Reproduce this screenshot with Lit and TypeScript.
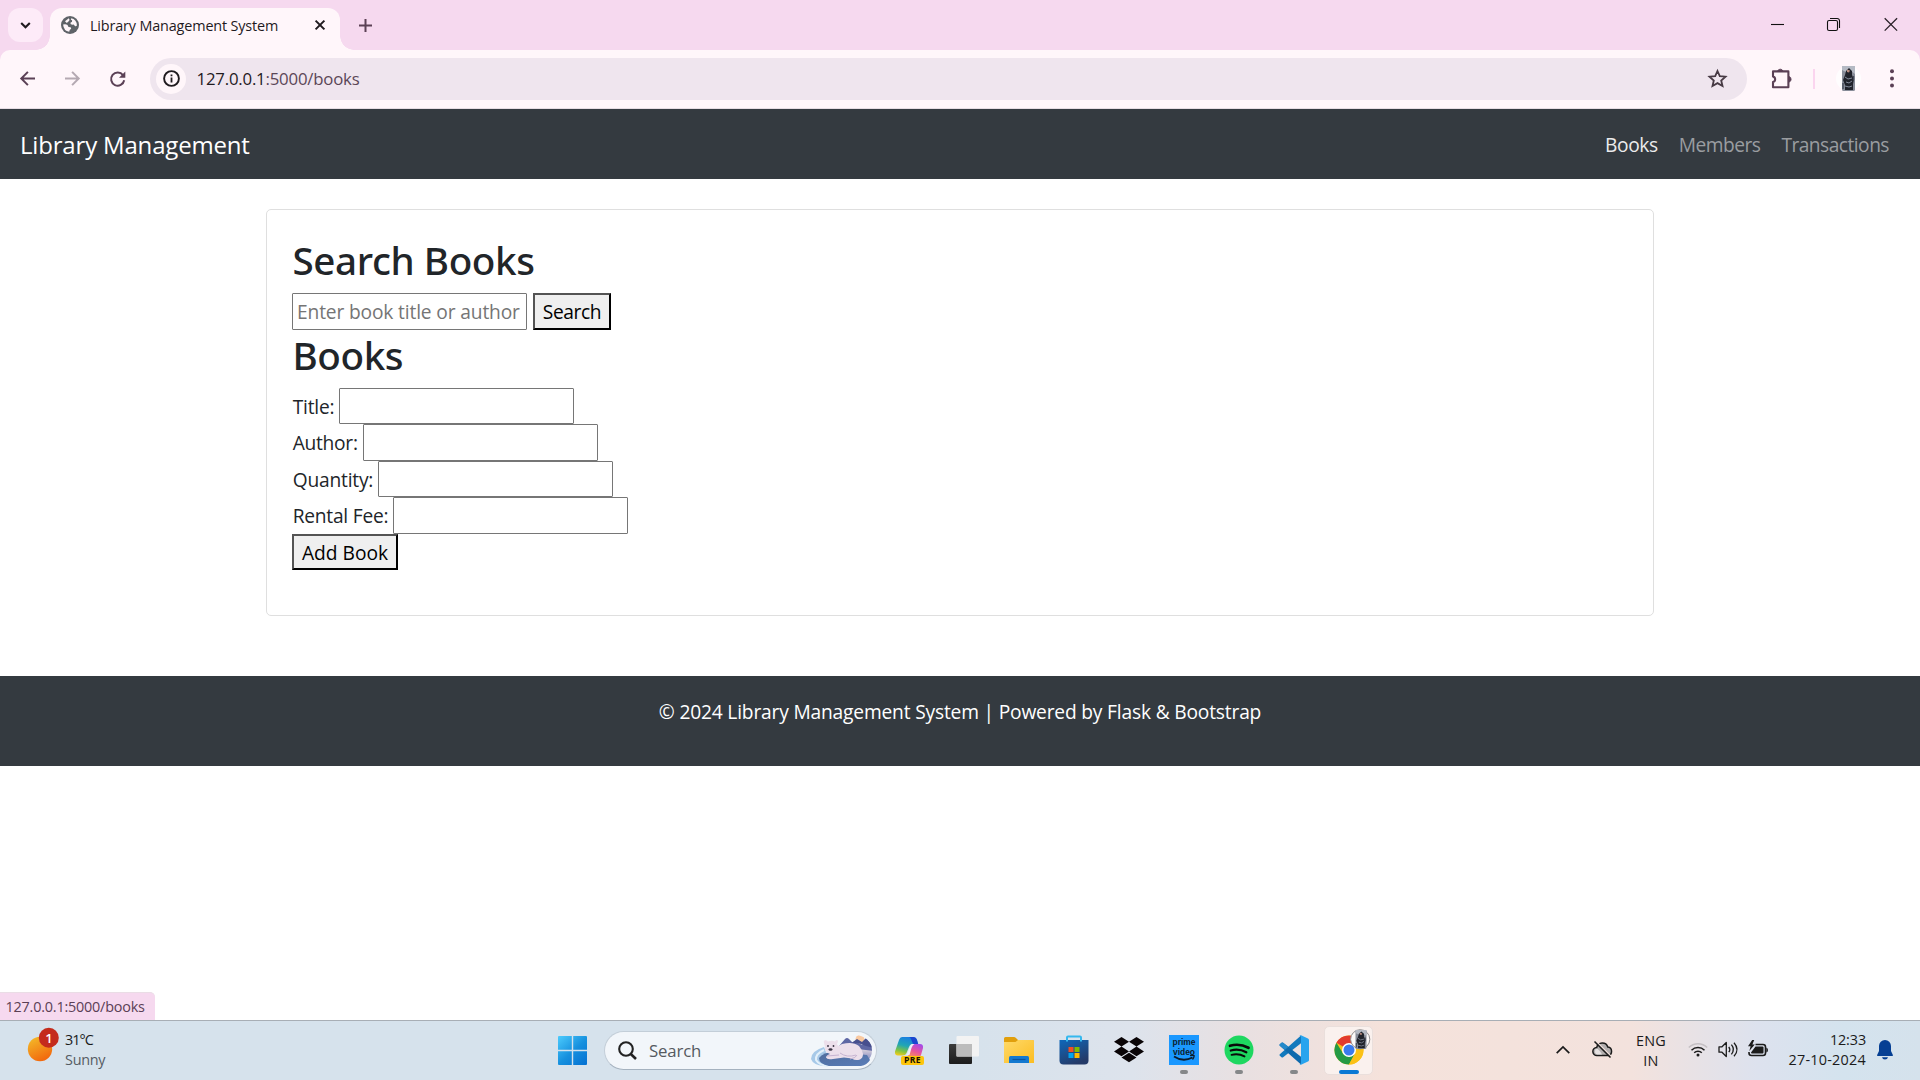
import { LitElement, html, css, svg } from "lit";
import { customElement } from "lit/decorators.js";

const shared = css`
  *, *::before, *::after { box-sizing: border-box; }
  svg { display: block; flex: none; overflow: visible; }
  .t { white-space: nowrap; }
`;

/* small photo of a dark figure on a pale background */
const photo = svg`
  <rect x="0" y="0" width="13" height="25" rx="1.5" fill="#878c98"/>
  <path d="M0 0h13v8l-4-3-3 2-6-3z" fill="#b4b9c3"/>
  <path d="M4 5l3-3 3 3 0 4 2 4-1 5 0 6H3l0-5-2-5 2-5z" fill="#20232b"/>
  <path d="M5 3.500l3 1-1 2-2-.6z" fill="#b98d80"/>
  <path d="M3 11l3 2 4-1M4 16l3 1 3-2M3 20l4 1 3-1" fill="none" stroke="#838a99" stroke-width="1"/>
  <path d="M1 17v6M11.500 10v4" stroke="#454b59" stroke-width="1.400"/>`;

@customElement("browser-chrome")
export class BrowserChrome extends LitElement {
  static styles = [shared, css`
    :host { display: block; background: #f6d9ef; color: #1f1a1e; }
    .strip { display: flex; height: 50px; }
    .menu { width: 35px; height: 34px; margin: 8px 0 0 8px; border-radius: 12px; background: #fdebf8; display: flex; align-items: center; justify-content: center; }
    .tab { position: relative; width: 290px; height: 42px; margin: 8px 0 0 7px; border-radius: 12px 12px 0 0; background: #fff6fa; display: flex; align-items: flex-start; padding: 8px 15px 0 11px; }
    .tab::before, .tab::after { content: ""; position: absolute; bottom: 0; width: 14px; height: 14px; }
    .tab::before { left: -14px; background: radial-gradient(circle at 0 0, transparent 13.5px, #fff6fa 14px); }
    .tab::after { right: -14px; background: radial-gradient(circle at 100% 0, transparent 13.5px, #fff6fa 14px); }
    .tab .t { font-size: 14.4px; line-height: 20px; letter-spacing: -0.15px; margin-left: 11px; flex: 1; }
    .x { margin: 4px 0 0; }
    .plus { margin: 19px 0 0 19px; }
    .win { margin-left: auto; display: flex; align-items: flex-start; gap: 43px; padding: 17px 22px 0 0; }
    .win .close { margin-left: 1px; }
    .bar { height: 59px; background: #fff6fa; border-bottom: 1px solid #e6dce3; border-radius: 10px 10px 0 0; display: flex; align-items: center; padding: 0 26px 1px 20px; }
    .nav { display: flex; gap: 30px; width: 130px; }
    .omni { width: 1597px; height: 42px; border-radius: 21px; background: #efe5ee; display: flex; align-items: center; padding: 0 20px 0 6px; }
    .info { width: 30px; height: 30px; border-radius: 50%; background: #fff6fa; display: flex; align-items: center; justify-content: center; }
    .omni .t { margin-left: 10.5px; font-size: 16.8px; letter-spacing: -0.2px; flex: 1; color: #5b4757; }
    .omni b { font-weight: 400; color: #1f1a1e; }
    .ext { margin-left: 24px; }
    .sep { width: 2px; height: 20px; margin: 0 21px 0 21px; background: #fbd5ef; }
    .ava { width: 25px; height: 25px; border-radius: 50%; background: #fffdfe; display: flex; justify-content: center; }
    .dots { margin-left: auto; }
  `];
  render() {
    return html`
      <div class="strip">
        <div class="menu"><svg width="11" height="7" viewBox="0 0 11 7"><path d="M1.2 1l4.3 4.3L9.8 1" fill="none" stroke="#1f1a1e" stroke-width="2.1"/></svg></div>
        <div class="tab">
          <svg width="18" height="18" viewBox="0 0 18 18"><circle cx="9" cy="9" r="9" fill="#5f6368"/>
            <path d="M10.200 2.200A7 7 0 0 1 15.900 9.400q-.8 1.200-2 .6l-1.200-1.400q-1.800.3-2.900-.4-.9-1.300.2-2l1-.3.1-1.600-1.200-.5z" fill="#fff6fa"/>
            <path d="M2.100 8.600q2.800-.7 4.400.5l1 1.800 2.200.4.500 1.500-1.500 1.100-.5 1.900Q2.600 15 2.100 8.600z" fill="#fff6fa"/>
            <path d="M4 5.200L7.800 2.300 8.600 4 7.400 5.600 5.800 6.900z" fill="#fff6fa"/></svg>
          <span class="t">Library Management System</span>
          <svg class="x" width="10" height="10" viewBox="0 0 10 10"><path d="M.6.6l8.800 8.800M9.400.6L.6 9.400" stroke="#1f1a1e" stroke-width="2"/></svg>
        </div>
        <svg class="plus" width="13" height="13" viewBox="0 0 13 13"><path d="M6.5 0v13M0 6.5h13" stroke="#5b4055" stroke-width="2"/></svg>
        <div class="win">
          <svg width="13" height="14" viewBox="0 0 13 14"><path d="M0 7.5h13" stroke="#111" stroke-width="1.1"/></svg>
          <svg width="13" height="14" viewBox="0 0 13 14" fill="none" stroke="#111" stroke-width="1.1"><rect x=".5" y="3.500" width="10" height="10" rx="1.6"/><path d="M3 1.500h7.200a2.300 2.300 0 0 1 2.300 2.300v7.200"/></svg>
          <svg class="close" width="14" height="14" viewBox="0 0 14 14"><path d="M.7 1.2l12.4 12.4M13.1 1.2L.7 13.6" stroke="#2a2028" stroke-width="1.3"/></svg>
        </div>
      </div>
      <div class="bar">
        <div class="nav">
          <svg width="15" height="15" viewBox="0 0 15 15" fill="none" stroke="#5b4055" stroke-width="2"><path d="M15 7.5H1.6M7.900.9L1.300 7.500l6.600 6.600"/></svg>
          <svg width="15" height="15" viewBox="0 0 15 15" fill="none" stroke="#b5a9b2" stroke-width="2"><path d="M0 7.500h13.400M7.100.9l6.600 6.600-6.600 6.600"/></svg>
          <svg width="16" height="16" viewBox="0 0 16 16"><path d="M14.200 9.300a6.600 6.600 0 1 1-1.200-5.200" fill="none" stroke="#5b4055" stroke-width="2"/><path d="M15.300.4v6.400H9z" fill="#5b4055"/></svg>
        </div>
        <div class="omni">
          <div class="info"><svg width="17" height="17" viewBox="0 0 17 17"><circle cx="8.500" cy="8.500" r="7.400" fill="none" stroke="#1f1a1e" stroke-width="1.900"/><path d="M8.500 7.500v5M8.500 4.400v1.900" stroke="#1f1a1e" stroke-width="1.800"/></svg></div>
          <span class="t"><b>127.0.0.1</b>:5000/books</span>
          <svg width="20" height="19" viewBox="0 0 20 19"><path d="M10.500 2l2.300 5.200 5.700.5-4.300 3.800 1.300 5.500-5-2.900-5 2.900 1.300-5.500-4.300-3.800 5.700-.5z" fill="none" stroke="#473a44" stroke-width="1.800"/></svg>
        </div>
        <svg class="ext" width="21" height="22" viewBox="0 0 21 22"><path d="M2 3.400h15.400v15.800H2v-5.100a2.900 2.900 0 0 0 0-5.600z" fill="none" stroke="#5b4055" stroke-width="2.100" stroke-linejoin="round"/><path d="M6.600 3a2.900 2.900 0 0 1 5.400 0z M18 8.500a2.900 2.900 0 0 1 0 5.600z" fill="#5b4055" stroke="#5b4055" stroke-width=".8"/></svg>
        <div class="sep"></div>
        <div class="ava"><svg width="13" height="25" viewBox="0 0 13 25">${photo}</svg></div>
        <svg class="dots" width="4" height="19" viewBox="0 0 4 19" fill="#5b4055"><circle cx="2" cy="2.200" r="2"/><circle cx="2" cy="9.400" r="2"/><circle cx="2" cy="16.600" r="2"/></svg>
      </div>`;
  }
}

const fields = [
  { label: "Title:", width: 47, spacing: -0.22 },
  { label: "Author:", width: 71, spacing: -0.28 },
  { label: "Quantity:", width: 86, spacing: -0.2 },
  { label: "Rental Fee:", width: 101, spacing: -0.24 },
];

@customElement("library-page")
export class LibraryPage extends LitElement {
  static styles = [shared, css`
    :host { display: block; flex: 1; background: #fff; color: #212529; font-size: 19.2px; line-height: 30px; }
    .navbar { height: 70px; background: #343a40; display: flex; align-items: center; justify-content: space-between; padding: 2px 31px 0 20px; color: #fff; }
    .brand { font-size: 24px; letter-spacing: -0.18px; }
    .links { display: flex; gap: 21px; color: #9a9da0; letter-spacing: -0.53px; }
    .links .on { color: #ebebec; letter-spacing: -0.4px; }
    .card { width: 1388px; height: 407px; margin: 30px auto 0; border: 1px solid #dfdfdf; border-radius: 5px; padding: 25px; }
    h2 { margin: 0 0 10px; font: 500 38.6px/48px "Noto Sans", sans-serif; letter-spacing: -0.4px; padding: 1px 0 0 .5px; height: 48px; }
    .row { display: flex; height: 36.5px; align-items: flex-start; }
    .row label { line-height: 38px; white-space: nowrap; padding-left: .7px; }
    input { width: 235px; height: 36.5px; border: 1px solid #767676; border-radius: 1px; padding: 0 4px; margin: 0; font: inherit; background: #fff; outline: 0; letter-spacing: -0.15px; }
    input::placeholder { color: #757575; }
    button { height: 36.5px; border: 2px outset #000; border-radius: 0; background: #efefef; color: #000; font: inherit; padding: 1px 0 0; margin: 0; white-space: nowrap; }
    .go { width: 78px; margin-left: 6px; letter-spacing: -0.4px; }
    .add { width: 106px; padding-top: 2px; }
    .foot { height: 90px; margin-top: 60px; background: #343a40; color: #fff; text-align: center; padding-top: 21px; letter-spacing: -0.18px; }
  `];
  render() {
    return html`
      <div class="navbar">
        <span class="t brand">Library Management</span>
        <div class="links"><span class="t on">Books</span><span class="t">Members</span><span class="t">Transactions</span></div>
      </div>
      <div class="card">
        <h2>Search Books</h2>
        <div class="row"><input placeholder="Enter book title or author"><button class="go">Search</button></div>
        <h2>Books</h2>
        ${fields.map((f) => html`<div class="row"><label style="width:${f.width}px;letter-spacing:${f.spacing}px">${f.label}</label><input></div>`)}
        <div class="row"><button class="add">Add Book</button></div>
      </div>
      <div class="foot">© 2024 Library Management System | Powered by Flask &amp; Bootstrap</div>`;
  }
}

const bear = svg`
  <defs>
    <linearGradient id="lake" x1="0" y1="0" x2="0" y2="1"><stop offset="0" stop-color="#f5e9e4"/><stop offset=".45" stop-color="#a9a9cc"/><stop offset="1" stop-color="#6f86b8"/></linearGradient>
    <linearGradient id="rock" x1="0" y1="0" x2="1" y2="1"><stop offset="0" stop-color="#4f6c9c"/><stop offset="1" stop-color="#5a7db8"/></linearGradient>
    <clipPath id="cap"><path d="M24 0h21a17 15.500 0 0 1 0 31H12z"/></clipPath>
  </defs>
  <path d="M14 12Q1 16 1 24q2 6 13 7h8z" fill="#a7c9e8"/><path d="M14 15Q5 19 6 25q3 5 12 6" fill="none" stroke="#e3f0fa" stroke-width="2"/>
  <g clip-path="url(#cap)"><rect x="28" y="11" width="36" height="20" fill="url(#lake)"/><circle cx="50" cy="4.500" r="4.500" fill="#f9c9a0"/>
    <path d="M29 11l6-7q2-2 4 0l4 4 4-1 5 3 5-5 7 6v5q-18-3-35-2z" fill="#5e67a4"/><path d="M40 9l8-1 8 3 8 2v-5l-7-6-5 5-5-3z" fill="#474f8e"/></g>
  <path d="M9 23q5-7 18-6l30 3 3 5q-3 5-9 6H19Q9 29 9 23z" fill="url(#rock)"/>
  <path d="M14 8q-1-2 1-3 2 0 3 1.500 4-1.500 7 0Q27 4 28 6q0 2-1.200 3l1.500 2Q32 8.500 36 8.200 44 7 49 11q3.500 4 4 8 0 4-3 5.500-5 1.500-8-1l-8-1-11 1.500q-6 1-7-1.500 0-2 4-3.500-6-2-5-7z" fill="#ecdfeb"/>
  <path d="M30 18q7 5 16 2M17 21l12-1M40 24q6-1 7-4" fill="none" stroke="#c6b3d1" stroke-width="1"/>
  <circle cx="18" cy="11" r=".9" fill="#3b3444"/><circle cx="23.500" cy="11" r=".9" fill="#3b3444"/><ellipse cx="20.500" cy="14.500" rx="2" ry="1.300" fill="#3b3444"/>`;

@customElement("task-bar")
export class TaskBar extends LitElement {
  static styles = [shared, css`
    :host { display: flex; height: 60px; border-top: 1px solid #a8aeb5; color: #1b1b1b; font-size: 14.4px; line-height: 20px;
      background: linear-gradient(90deg, #d6e2ec 0, #d6e2ec 50%, #dde3ec 59%, #e9e0e1 65%, #f5e2db 72%, #f3e2dd 85%, #dde2ee 91.5%, #d4e3ee 96%, #d5e2ec 100%); }
    .weather { width: 545px; padding: 8px 0 0 28px; display: flex; }
    .weather svg { margin-top: -1px; }
    .weather .txt { margin-left: 6px; padding-top: 1px; display: flex; flex-direction: column; }
    .deg { letter-spacing: -0.95px; }
    .sunny { letter-spacing: -0.25px; color: #555c63; }
    .start { width: 59px; padding: 15px 0 0 13px; }
    .search { width: 273px; height: 39px; margin-top: 10px; border-radius: 20px; background: #f2f6fa; border: 1px solid #c3ced8; border-bottom-color: #a5b2bf; display: flex; align-items: center; padding: 0 2px 0 13px; }
    .search .t { margin-left: 12px; font-size: 16.8px; letter-spacing: -0.17px; color: #555a60; flex: 1; padding-top: 1px; }
    .apps { display: flex; margin-left: 4px; }
    .app { width: 55px; height: 59px; display: flex; flex-direction: column; align-items: center; justify-content: flex-start; }
    .app > svg { margin-top: 14px; }
    .app i { width: 8px; height: 4px; border-radius: 2px; background: #858789; margin-top: 5px; }
    .app.on { width: 49px; height: 49px; margin: 5px 0 0 3px; border-radius: 5px; background: #faf1ee; border: 1px solid #eadfdc; }
    .app.on > svg { margin-top: 8px; }
    .app.on i { width: 20px; background: #0a78d4; }
    .tray { flex: 1; display: flex; align-items: center; padding: 0 27px 2px 183px; }
    .tray .cloud { margin-left: 22px; }
    .lang { width: 32px; margin: 2px 0 0 22px; text-align: center; letter-spacing: .3px; }
    .wifi { margin-left: 21px; }
    .vol { margin-left: 10px; }
    .bat { margin-left: 10px; }
    .clock { margin: 1px 11px 0 auto; text-align: right; display: flex; flex-direction: column; }
    .date { letter-spacing: .24px; } .time { letter-spacing: -0.12px; }
  `];
  render() {
    return html`
      <div class="weather">
        <svg width="31" height="33" viewBox="0 0 31 33"><defs><linearGradient id="sun" x1=".2" y1="0" x2=".7" y2="1"><stop offset="0" stop-color="#f3b928"/><stop offset="1" stop-color="#f2640c"/></linearGradient></defs>
          <circle cx="12" cy="21" r="12.200" fill="url(#sun)"/><circle cx="20.800" cy="9.800" r="10" fill="#c42b1c"/>
          <text x="21" y="14.600" font-size="13" font-weight="600" fill="#fff" text-anchor="middle">1</text></svg>
        <div class="txt"><span class="t deg">31°C</span><span class="t sunny">Sunny</span></div>
      </div>
      <div class="start"><svg width="29" height="29" viewBox="0 0 29 29"><defs><linearGradient id="w" gradientUnits="userSpaceOnUse" x1="0" y1="0" x2="26" y2="29"><stop offset="0" stop-color="#4ccbfd"/><stop offset=".55" stop-color="#1690de"/><stop offset="1" stop-color="#0673d3"/></linearGradient></defs>
        <path d="M1 0h12.800v13.800H0V1a1 1 0 0 1 1-1zM15.200 0H28a1 1 0 0 1 1 1v12.800H15.200zM0 15.200h13.800V29H1a1 1 0 0 1-1-1zM15.200 15.200H29V28a1 1 0 0 1-1 1H15.200z" fill="url(#w)"/></svg></div>
      <div class="search">
        <svg width="19" height="19" viewBox="0 0 19 19" fill="none" stroke="#222" stroke-width="2.100"><circle cx="8" cy="8" r="6.800"/><path d="M12.800 13l5.200 5" stroke-width="2.600"/></svg>
        <span class="t">Search</span>
        <svg width="64" height="31" viewBox="0 0 64 31">${bear}</svg>
      </div>
      <div class="apps">
        <div class="app"><svg width="30" height="30" viewBox="0 0 30 30"><defs>
            <linearGradient id="ca" x1=".5" y1="0" x2=".2" y2="1"><stop offset="0" stop-color="#1a7fe0"/><stop offset=".45" stop-color="#21a6b4"/><stop offset=".75" stop-color="#7fc343"/><stop offset="1" stop-color="#f2cc1c"/></linearGradient>
            <linearGradient id="cb" x1=".8" y1="0" x2=".3" y2="1"><stop offset="0" stop-color="#a34bea"/><stop offset=".5" stop-color="#e8549d"/><stop offset="1" stop-color="#fb9a4c"/></linearGradient></defs>
          <path d="M8 2h11q3 0 4 3l1 4h-5q-3 0-4 3l-2.500 6q-1 2.500-4 2.500H4q-3.500 0-3-4L5 5q1-3 3-3z" fill="url(#ca)"/>
          <path d="M15 2h4q3 0 4 3l1.200 4H19l-2-5q-.6-2-2-2z" fill="#1b46cf"/>
          <path d="M20 9h6q3.500 0 3 4l-2 7q-1 3-4 3H10.500q3 0 4-3l2.500-8q1-3 3-3z" fill="url(#cb)"/>
          <path d="M18 9h2.500q-2 1-3 4l-2 7H12q1 0 2-3l2-5q.8-3 2-3z" fill="#eef0f8"/>
          <rect x="7" y="21" width="23" height="9" rx="2" fill="#fdc50c"/><text x="18.500" y="28.400" font-size="8.600" font-weight="700" letter-spacing=".4" text-anchor="middle" fill="#1a1400">PRE</text></svg></div>
        <div class="app"><svg width="30" height="30" viewBox="0 0 30 30"><defs><linearGradient id="tv" x1="0" y1="0" x2="0" y2="1"><stop offset="0" stop-color="#3c3c3c"/><stop offset="1" stop-color="#1c1c1c"/></linearGradient></defs>
          <rect x="0" y="9" width="23" height="20" rx="1" fill="url(#tv)"/><rect x="7.500" y="1" width="22.500" height="20.500" rx="1" fill="#f3f3f3"/><path d="M7.500 9H23v12.500H7.500z" fill="#bcbcbc"/></svg></div>
        <div class="app"><svg width="30" height="30" viewBox="0 0 30 30"><defs><linearGradient id="fo" x1="0" y1="0" x2="1" y2="1"><stop offset="0" stop-color="#ffd969"/><stop offset="1" stop-color="#fbbd22"/></linearGradient></defs>
          <path d="M0 3.500Q0 2 1.500 2H10q1 0 1.700.7L14 5h14.500Q30 5 30 6.500V12H0z" fill="#e19f0c"/><path d="M0 7h10.500q1 0 1.700-.6L14 5h14.700Q30 5 30 6.500V28H0z" fill="url(#fo)"/>
          <path d="M5 28v-5.500Q5 21 6.500 21h17Q25 21 25 22.500V28z" fill="#1379d0"/><path d="M8.500 24.500h13" stroke="#0a549f" stroke-width="1.200"/></svg></div>
        <div class="app"><svg width="30" height="30" viewBox="0 0 30 30"><defs><linearGradient id="st" x1="0" y1="0" x2=".5" y2="1"><stop offset="0" stop-color="#0f68bb"/><stop offset="1" stop-color="#243a68"/></linearGradient></defs>
          <path d="M.5 5h29v20.500q0 4-4 4h-21q-4 0-4-4z" fill="url(#st)"/><path d="M8 6.500V2.500Q8 1.500 9 1.500h12q1 0 1 1V6.500" fill="none" stroke="#35b8ee" stroke-width="2"/>
          <path d="M9.500 12h5v5h-5z" fill="#f25022"/><path d="M15.500 12h5v5h-5z" fill="#7fba00"/><path d="M9.500 18h5v5h-5z" fill="#00a4ef"/><path d="M15.500 18h5v5h-5z" fill="#ffb900"/></svg></div>
        <div class="app"><svg width="30" height="30" viewBox="0 0 30 30"><path d="M7.500 2l7.500 4.800-7.500 4.800L0 6.800zM22.500 2L30 6.800l-7.500 4.800L15 6.800zM7.500 11.600l7.500 4.800-7.500 4.800L0 16.400zM22.500 11.600l7.500 4.800-7.500 4.800L15 16.400zM15 17.800l7.500 4.700L15 27.300l-7.500-4.800z" fill="#0a0507"/></svg></div>
        <div class="app"><svg width="30" height="30" viewBox="0 0 30 30"><rect width="30" height="30" fill="#1a98ff"/>
          <g font-family="Liberation Sans" font-size="8.200" font-weight="700" text-anchor="middle" fill="#0b1b2b"><text x="15" y="9.600" textLength="23" lengthAdjust="spacingAndGlyphs">prime</text><text x="15" y="19.700" textLength="22" lengthAdjust="spacingAndGlyphs">video</text></g>
          <path d="M5 21.500q9 6 18.500 1" fill="none" stroke="#0b1b2b" stroke-width="1.800"/><path d="M21 20.600q3-.8 4.200.2-.2 2-1.700 3.700" fill="none" stroke="#0b1b2b" stroke-width="1.300"/></svg><i></i></div>
        <div class="app"><svg width="30" height="30" viewBox="0 0 30 30"><circle cx="15" cy="15" r="14.500" fill="#1ed760"/><g fill="none" stroke="#0a0a0a" stroke-linecap="round"><path d="M6 10.800q9.500-2.800 18.500 2" stroke-width="2.700"/><path d="M6.800 15.500q8-2.300 15.500 1.700" stroke-width="2.300"/><path d="M7.500 19.900q7-1.700 13 1.500" stroke-width="1.900"/></g></svg><i></i></div>
        <div class="app"><svg width="30" height="30" viewBox="0 0 30 30"><path d="M22 .4L.8 19.300q-.8.800 0 1.500l1.700 1.500q.8.600 1.600 0L22 8.300z" fill="#1279bd"/><path d="M22 29.600L.8 10.700q-.8-.8 0-1.500l1.700-1.500q.8-.6 1.600 0L22 21.700z" fill="#0e6aad"/><path d="M9.500 11.800L4.100 7.700q-.8-.6-1.600 0L.8 9.200q-.8.700 0 1.500l5 4.400z" fill="#2489ca"/><path d="M22 .2l7 3.200q1 .5 1 1.600v20q0 1.100-1 1.600l-7 3.200q-1 .2-2-.8 1.500.8 2-1V2q-.5-1.800-2-1 1-1 2-.8z" fill="#28a4ee"/></svg><i></i></div>
        <div class="app on"><svg width="30" height="30" viewBox="0 0 30 30">
          <circle cx="15" cy="15" r="14.500" fill="#fbc116"/>
          <path d="M15 15L2.400 7.800A14.500 14.500 0 0 1 27.600 7.800z" fill="#e33b2e"/>
          <path d="M2.440 7.750L9.100 18.500 15 21.800 20.900 18.400 15 29.500A14.500 14.500 0 0 1 2.440 7.750z" fill="#249a45"/><path d="M20.800 8.300h7.100A14.500 14.500 0 0 1 15 29.500l6-11z" fill="#fbc116"/>
          <circle cx="15" cy="15" r="7" fill="#fff"/><circle cx="15" cy="15" r="5.500" fill="#3a7bee"/>
          <circle cx="26.200" cy="4.300" r="9.600" fill="#fcfafa" stroke="#8f8d8e" stroke-width="1"/><svg x="21.500" y="-5" width="11" height="19" viewBox="0 0 13 25" preserveAspectRatio="none">${photo}</svg></svg><i></i></div>
      </div>
      <div class="tray">
        <svg width="14" height="8" viewBox="0 0 14 8"><path d="M.7 7.200L7 1l6.300 6.200" fill="none" stroke="#1b1b1b" stroke-width="1.700"/></svg>
        <svg class="cloud" width="21" height="17" viewBox="0 0 21 17"><path d="M5 14.500a4 4 0 0 1-.3-8A5.800 5.800 0 0 1 15.800 6a4.300 4.300 0 0 1 .2 8.500z" fill="#b4b0b0" stroke="#1b1b1b" stroke-width="1.500"/><path d="M3.500 8q3-1 6.500 5.500H5q-3-1-1.500-5.500z" fill="#e6e2e2"/><path d="M3.700 0l16 16" stroke="#f3e2dd" stroke-width="1.500"/><path d="M2.500 .5l16 16" stroke="#1b1b1b" stroke-width="1.600"/></svg>
        <div class="lang">ENG<br>IN</div>
        <svg class="wifi" width="20" height="15" viewBox="0 0 20 15" fill="none" stroke="#1b1b1b" stroke-width="1.500"><path d="M.8 5.500a13 13 0 0 1 18.400 0" stroke="#c5c0c4"/><path d="M3.500 8.200a9.200 9.200 0 0 1 13 0M6.200 10.800a5.400 5.400 0 0 1 7.600 0"/><circle cx="10" cy="13" r="1.500" fill="#1b1b1b" stroke="none"/></svg>
        <svg class="vol" width="20" height="17" viewBox="0 0 20 17" fill="none" stroke="#1b1b1b" stroke-width="1.300"><path d="M1 5.800h3l4.300-4.300v14L4 11.200H1z" stroke-linejoin="round"/><path d="M10.800 5.800q2 2.700 0 5.400M13.400 3.700q4 4.800 0 9.600M16 1.700q6 6.800 0 13.600"/></svg>
        <svg class="bat" width="20" height="17" viewBox="0 0 20 17"><path d="M7.500 3.500H15q2.500 0 2.500 2.500v6q0 2.500-2.500 2.500H3.500Q1 14.500 1 12v-1" fill="none" stroke="#1b1b1b" stroke-width="1.600"/><path d="M7.500 5.500h7q1 0 1 1v5q0 1-1 1H4q-1 0-1-1z" fill="#1b1b1b"/><path d="M18.300 6.500q1.700.5 1.700 2.500t-1.700 2.500z" fill="#1b1b1b"/><path d="M4.200-1L0 5.200h2.600L1.300 10 6.800 3.400H4.400L6.200-1z" fill="#1b1b1b"/></svg>
        <div class="clock"><span class="t time">12:33</span><span class="t date">27-10-2024</span></div>
        <svg width="16" height="20" viewBox="0 0 16 20"><path d="M8 0a6 6 0 0 1 6 6v5l2 4.200q0 .8-.8.8H.8q-.8 0-.8-.8L2 11V6a6 6 0 0 1 6-6zM5 17.200h6Q10.500 19.500 8 19.500T5 17.200z" fill="#053f93"/></svg>
      </div>`;
  }
}

@customElement("app-root")
export class AppRoot extends LitElement {
  static styles = [shared, css`
    :host { display: flex; flex-direction: column; position: relative; width: 1920px; height: 1080px; overflow: hidden; background: #fff; font-family: "Open Sans", "Noto Sans", sans-serif; }
    .status { position: absolute; left: 0; bottom: 60px; width: 155px; height: 28px; padding-left: 5.5px; background: #f6d9ef; border-top: 1px solid #eadde6; border-top-right-radius: 5px; font-size: 14.4px; line-height: 27px; letter-spacing: -0.2px; color: #5b4055; }
  `];
  render() {
    return html`<browser-chrome></browser-chrome><library-page></library-page><div class="status t">127.0.0.1:5000/books</div><task-bar></task-bar>`;
  }
}
